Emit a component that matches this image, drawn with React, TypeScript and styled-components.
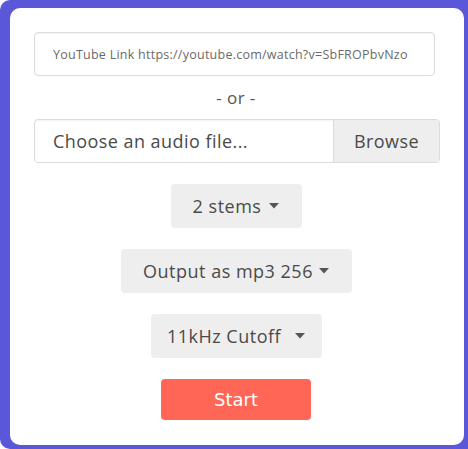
import React from "react";
import styled, { createGlobalStyle } from "styled-components";

const GlobalStyle = createGlobalStyle`
  html, body { margin: 0; padding: 0; background: #ffffff; }
  * { box-sizing: border-box; }
`;

const Frame = styled.div`
  width: 468px;
  height: 449px;
  background: #5b57d9;
  border-radius: 10px 0 0 10px;
  padding: 8px 4px 4px 10px;
  font-family: "Open Sans", "Noto Sans", sans-serif;
`;

const Card = styled.div`
  height: 100%;
  background: #ffffff;
  border-radius: 10px;
  padding: 24px 26px 0 24px;
  display: flex;
  flex-direction: column;
  align-items: center;
`;

const LinkInput = styled.input`
  align-self: flex-start;
  width: 401px;
  height: 44px;
  border: 1px solid #dcdcdc;
  border-radius: 4px;
  padding: 0 0 0 18px;
  font-family: inherit;
  font-size: 12.5px;
  letter-spacing: 0.25px;
  color: #666;
  box-shadow: inset 0 1px 2px rgba(0, 0, 0, 0.06);
  outline: none;
  &::placeholder { color: #6a6a6a; }
`;

const OrText = styled.div`
  height: 43px;
  display: flex;
  align-items: center;
  justify-content: center;
  font-size: 17px;
  letter-spacing: 0.4px;
  color: #555;
`;

const FileRow = styled.label`
  align-self: flex-start;
  width: 406px;
  height: 44px;
  border: 1px solid #dcdcdc;
  border-radius: 4px;
  display: flex;
  overflow: hidden;
  font-size: 18px;
  letter-spacing: 0.45px;
  color: #4a4a4a;
`;

const FileLabel = styled.span`
  flex: 1;
  display: flex;
  align-items: center;
  padding-left: 18px;
  box-shadow: inset 0 1px 2px rgba(0, 0, 0, 0.05);
`;

const Browse = styled.span`
  width: 106px;
  display: flex;
  align-items: center;
  justify-content: center;
  background: #eeeeee;
  border-left: 1px solid #dcdcdc;
`;

const DropButton = styled.button<{ $w: number; $gap?: number }>`
  margin-top: 21px;
  width: ${(p) => p.$w}px;
  height: 44px;
  border: none;
  border-radius: 4px;
  background: #eeeeee;
  font-family: inherit;
  font-size: 18px;
  letter-spacing: 0.5px;
  color: #4a4a4a;
  display: flex;
  align-items: center;
  justify-content: center;
  gap: ${(p) => p.$gap ?? 8}px;
  padding: 0;
`;

const Caret = styled.svg`
  width: 10px;
  height: 6px;
  flex: none;
`;

const StartButton = styled.button`
  margin-top: 21px;
  width: 150px;
  height: 41px;
  border: none;
  border-radius: 4px;
  background: #ff6655;
  color: #ffffff;
  font-family: "DejaVu Sans", sans-serif;
  font-size: 18px;
`;

const CaretIcon = () => (
  <Caret viewBox="0 0 10 6">
    <path d="M0 0 L10 0 L5 5.5 Z" fill="#555" />
  </Caret>
);

export default function App() {
  return (
    <>
      <GlobalStyle />
      <Frame>
        <Card>
          <LinkInput placeholder="YouTube Link https://youtube.com/watch?v=SbFROPbvNzo" />
          <OrText>- or -</OrText>
          <FileRow>
            <FileLabel>Choose an audio file...</FileLabel>
            <Browse>Browse</Browse>
          </FileRow>
          <DropButton $w={131}>
            2 stems <CaretIcon />
          </DropButton>
          <DropButton $w={231} $gap={6}>
            Output as mp3 256 <CaretIcon />
          </DropButton>
          <DropButton $w={171} $gap={14}>
            11kHz Cutoff <CaretIcon />
          </DropButton>
          <StartButton>Start</StartButton>
        </Card>
      </Frame>
    </>
  );
}
